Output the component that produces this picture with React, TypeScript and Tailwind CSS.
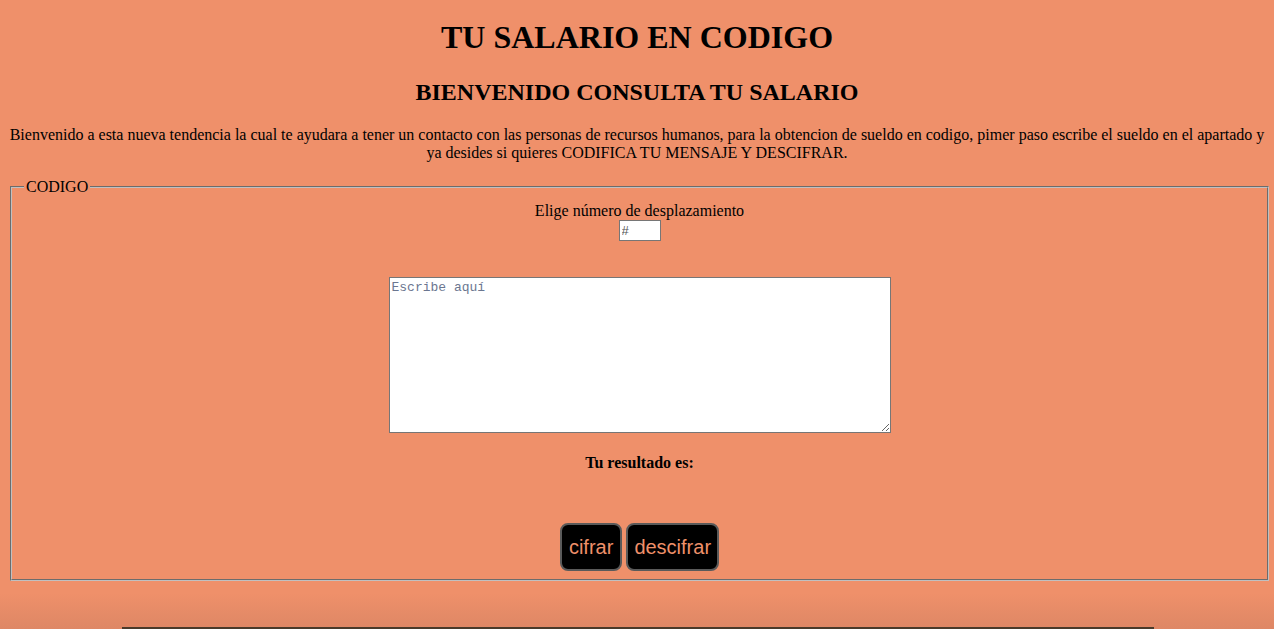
import React from "react";

const App: React.FC = () => {
  return (
    <div className="relative min-h-[629px] bg-[#ef906a] text-black font-['Liberation_Serif',serif] overflow-hidden">
      <div className="px-[8px] pt-[19px] pb-[48px]">
        {/* Headings */}
        <h1 className="text-center text-[32px] font-bold leading-[37px]">TU SALARIO EN CODIGO</h1>
        <h2 className="mt-[22px] text-center text-[24px] font-bold leading-[28px]">
          BIENVENIDO CONSULTA TU SALARIO
        </h2>
        <p className="mt-[20px] text-center text-[16px] leading-[18px]">
          Bienvenido a esta nueva tendencia la cual te ayudara a tener un contacto con las personas de recursos humanos, para la obtencion de sueldo en codigo, pimer paso escribe el sueldo en el apartado y ya desides si quieres CODIFICA TU MENSAJE Y DESCIFRAR.
        </p>

        {/* Form */}
        <fieldset className="mt-[16px] ml-[2px] mr-[-3px] border-2 [border-style:groove] border-[#c0c0c0] px-[12px] pt-[6px] pb-[8px]">
          <legend className="px-[2px] text-[16px] leading-[18px]">CODIGO</legend>
          <div className="flex flex-col items-center">
            <label className="text-[16px] leading-[18px]">Elige número de desplazamiento</label>
            <input
              type="text"
              placeholder="#"
              className="w-[42px] h-[21px] bg-white border border-[#767676] px-[2px] text-[13px] placeholder:text-[#555] font-['Liberation_Sans',sans-serif]"
            />
            <textarea
              placeholder="Escribe aquí"
              className="mt-[36px] w-[502px] h-[156px] bg-white border border-[#767676] p-[2px] text-[13px] leading-[15px] font-['Liberation_Mono',monospace] placeholder:text-[#6b7690]"
            />
            <h4 className="mt-[21px] text-[16px] font-bold leading-[18px]">Tu resultado es:</h4>
            <div className="mt-[51px] flex gap-[4px]">
              <button className="h-[48px] px-[7px] bg-black text-[#ef906a] text-[20px] font-['Liberation_Sans',sans-serif] border-2 border-[#5a5a5a] rounded-[8px]">
                cifrar
              </button>
              <button className="h-[48px] px-[6px] bg-black text-[#ef906a] text-[20px] font-['Liberation_Sans',sans-serif] border-2 border-[#5a5a5a] rounded-[8px]">
                descifrar
              </button>
            </div>
          </div>
        </fieldset>
      </div>

      {/* bottom shadow */}
      <div className="absolute left-0 right-0 bottom-0 h-[36px] bg-gradient-to-b from-[#ef906a] to-[#de8765]">
        <div className="absolute left-[122px] right-[120px] bottom-0 h-[2px] bg-[#4a3a2a]" />
      </div>
    </div>
  );
};

export default App;
